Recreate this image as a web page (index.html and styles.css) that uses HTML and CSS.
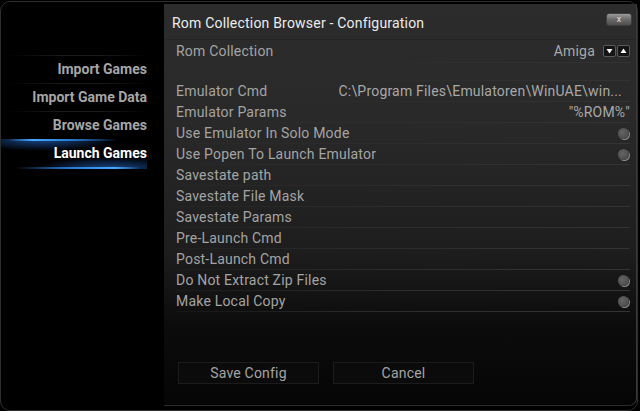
FILE: index.html
```html
<!DOCTYPE html>
<html>
<head>
<meta charset="utf-8">
<link rel="stylesheet" href="styles.css">
</head>
<body>
<div class="frame">
  <nav class="sidebar">
    <div class="menu">
      <div class="item">Import Games</div>
      <div class="item">Import Game Data</div>
      <div class="item">Browse Games</div>
      <div class="item selected">Launch Games</div>
    </div>
  </nav>
  <main class="panel">
    <header class="header">
      <div class="title">Rom Collection Browser - Configuration</div>
      <div class="close">x</div>
    </header>
    <div class="rows">
      <div class="row"><span class="label">Rom Collection</span><span class="value">Amiga <span class="spinner"><span class="spin"><svg width="7" height="6" viewBox="0 0 7 6"><path d="M0.5 1 H6.5 L3.5 5.5 Z" fill="#fff"/></svg></span><span class="spin"><svg width="7" height="6" viewBox="0 0 7 6"><path d="M0.5 5 H6.5 L3.5 0.5 Z" fill="#fff"/></svg></span></span></span></div>
      <div class="row blank"></div>
      <div class="row"><span class="label">Emulator Cmd</span><span class="value cmd">C:\Program Files\Emulatoren\WinUAE\win...</span></div>
      <div class="row"><span class="label">Emulator Params</span><span class="value">"%ROM%"</span></div>
      <div class="row"><span class="label">Use Emulator In Solo Mode</span><span class="radio"></span></div>
      <div class="row"><span class="label">Use Popen To Launch Emulator</span><span class="radio"></span></div>
      <div class="row"><span class="label">Savestate path</span></div>
      <div class="row"><span class="label">Savestate File Mask</span></div>
      <div class="row"><span class="label">Savestate Params</span></div>
      <div class="row"><span class="label">Pre-Launch Cmd</span></div>
      <div class="row"><span class="label">Post-Launch Cmd</span></div>
      <div class="row"><span class="label">Do Not Extract Zip Files</span><span class="radio"></span></div>
      <div class="row"><span class="label">Make Local Copy</span><span class="radio"></span></div>
    </div>
    <div class="buttons">
      <div class="button">Save Config</div>
      <div class="button">Cancel</div>
    </div>
  </main>
</div>
</body>
</html>
```

FILE: styles.css
```css
html, body {
  margin: 0;
  padding: 0;
  background: #000;
}
body {
  width: 640px;
  height: 411px;
  overflow: hidden;
  font-family: Roboto, "Liberation Sans", sans-serif;
}
.frame {
  box-sizing: border-box;
  width: 638px;
  height: 410px;
  margin: 1px 0 0 0;
  border: 1px solid #2e2e2e;
  border-radius: 10px;
  display: flex;
  background: #000;
}
.sidebar {
  width: 163px;
  flex: none;
}
.menu {
  margin-top: 53px;
  padding-right: 17px;
}
.item {
  height: 27px;
  line-height: 27px;
  text-align: right;
  font-weight: bold;
  font-size: 14px;
  color: #a6a6a6;
  border-top: 1px solid transparent;
  border-image: linear-gradient(90deg, rgba(40,40,40,0) 5%, #1a1a1a 40%, #1a1a1a 70%, rgba(40,40,40,0)) 1;
}
.item.selected {
  color: #fff;
  border-image: none;
  border-top: 0;
  height: 30px;
  line-height: 28px;
  background:
    linear-gradient(90deg, rgba(20,100,200,0) 5%, #49a8ff 22%, #2a7fd8 45%, rgba(20,100,200,0) 80%) top / 100% 2px no-repeat,
    linear-gradient(90deg, rgba(20,100,200,0) 10%, #2a7fd8 50%, #49a8ff 78%, rgba(20,100,200,0) 95%) bottom / 100% 2px no-repeat,
    radial-gradient(ellipse 75px 12px at 28% 0, rgba(40,120,230,0.6), rgba(0,0,0,0)),
    radial-gradient(ellipse 75px 12px at 75% 100%, rgba(40,120,230,0.6), rgba(0,0,0,0));
}
.panel {
  flex: 1;
  margin: 2px 0 4px 0;
  border-right: 1px solid #3a3a3a;
  border-bottom: 1px solid #2a2a2a;
  border-radius: 0 0 8px 0;
  background: linear-gradient(#2c2c2c 0, #292929 30%, #1d1d1d 62%, #0c0c0c 80%, #050505 100%);
  display: flex;
  flex-direction: column;
  letter-spacing: 0.2px;
}
.header {
  height: 36px;
  box-sizing: border-box;
  display: flex;
  justify-content: space-between;
  padding: 0 4px 0 8px;
  border-bottom: 1px solid #252525;
}
.title {
  color: #ececec;
  font-size: 14px;
  line-height: 39px;
}
.close {
  margin-top: 9px;
  width: 24px;
  height: 11px;
  border-radius: 3px;
  border: 1px solid #3e3e3e;
  background: linear-gradient(#9a9a9a, #6a6a6a 50%, #4e4e4e);
  color: #ddd;
  font-size: 9px;
  line-height: 10px;
  text-align: center;
  letter-spacing: 0;
}
.rows {
  display: flex;
  flex-direction: column;
  padding: 0 6px 0 12px;
}
.row {
  height: 21px;
  box-sizing: border-box;
  display: flex;
  align-items: center;
  justify-content: space-between;
  font-size: 14px;
  color: #a4a4a4;
  border-bottom: 1px solid transparent;
  border-image: linear-gradient(90deg, rgba(44,44,44,0.25), #2c2c2c 45%, #343434 100%) 1;
}
.row:first-child {
  height: 23px;
}
.row.blank {
  height: 18px;
}
.value {
  display: flex;
  align-items: center;
  color: #a8a8a8;
}
.value.cmd {
  margin-right: 8px;
}
.spinner {
  display: flex;
  margin-left: 8px;
  gap: 1px;
}
.spin {
  width: 13px;
  height: 12px;
  box-sizing: border-box;
  border: 1px solid #5a5a5a;
  border-radius: 2px;
  background: #141414;
  display: flex;
  align-items: center;
  justify-content: center;
}
.radio {
  width: 11px;
  height: 11px;
  border-radius: 50%;
  margin-right: 1px;
  background: radial-gradient(circle at 40% 40%, #646464 0, #505050 60%, #3c3c3c 100%);
  box-shadow: 1px 1px 0 0 #8a8a8a;
}
.buttons {
  display: flex;
  gap: 14px;
  margin-top: 50px;
  padding-left: 14px;
}
.button {
  width: 141px;
  height: 22px;
  box-sizing: border-box;
  border: 1px solid #1c1c1c;
  background: #0b0b0b;
  color: #a4a4a4;
  font-size: 14px;
  line-height: 20px;
  text-align: center;
}
```
